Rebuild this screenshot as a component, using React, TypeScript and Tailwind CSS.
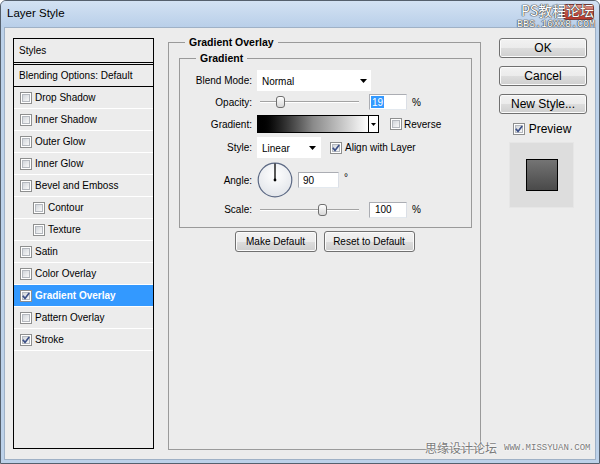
import React from "react";

const sans = "font-['Liberation_Sans',Arial,sans-serif]";
const cjk = "font-['Noto_Sans_CJK_SC','Liberation_Sans',sans-serif]";
const btn =
  "rounded-[3px] border border-[#707070] bg-[linear-gradient(#f2f2f2_0%,#ebebeb_50%,#dddddd_50%,#cfcfcf_100%)] shadow-[inset_0_0_0_1px_#fbfbfb] flex items-center justify-center text-black";

const styleRows = [
  { label: "Drop Shadow" },
  { label: "Inner Shadow" },
  { label: "Outer Glow" },
  { label: "Inner Glow" },
  { label: "Bevel and Emboss" },
  { label: "Contour", indent: true },
  { label: "Texture", indent: true },
  { label: "Satin" },
  { label: "Color Overlay" },
  { label: "Gradient Overlay", checked: true, active: true },
  { label: "Pattern Overlay" },
  { label: "Stroke", checked: true },
];

function CheckBox({ checked = false }: { checked?: boolean }) {
  return (
    <span className="w-[12px] h-[12px] shrink-0 border border-[#8e8f8f] bg-white p-[1px] flex">
      <span className="relative flex-1 border border-[#b4b8be] bg-gradient-to-br from-[#d2d6db] to-[#f8f8f8]">
        {checked && (
          <svg className="absolute -left-[1px] -top-[1px]" width="8" height="8" viewBox="0 0 8 8">
            <path d="M0.8 3.8 L3 6.4 L7.2 1" fill="none" stroke="#3b4f86" strokeWidth="1.7" />
          </svg>
        )}
      </span>
    </span>
  );
}

function Arrow() {
  return (
    <svg width="7" height="4" viewBox="0 0 7 4">
      <path d="M0 0h7L3.5 4z" fill="#000" />
    </svg>
  );
}

function Slider({ thumb }: { thumb: string }) {
  // thumb is a full left-[..] class
  return (
    <div className="relative w-[99px] h-[12px] flex items-center">
      <div className="w-full h-[2px] border-t border-[#a3a3a3] border-b border-b-white" />
      <div
        className={`absolute top-0 w-[9px] h-[12px] rounded-[3px] border border-[#6f6f6f] bg-gradient-to-b from-white to-[#d8d8d8] ${thumb}`}
      />
    </div>
  );
}

function Field({ children, w }: { children: React.ReactNode; w: string }) {
  return (
    <div className={`h-[16px] bg-white border border-[#abadb3] border-b-[#e3e9ef] border-r-[#dbdfe6] flex items-center ${w}`}>
      {children}
    </div>
  );
}

function Row({ label, h, children }: { label: string; h: string; children: React.ReactNode }) {
  return (
    <div className={`flex items-center ${h}`}>
      <span className="w-[72px] text-right">{label}</span>
      <div className="ml-[5px] flex items-center">{children}</div>
    </div>
  );
}

export default function App() {
  return (
    <div
      className={`relative w-[600px] h-[464px] overflow-hidden rounded-t-[6px] border border-[#55606d] bg-[#bcd1e9] flex flex-col text-[10px] text-black ${sans}`}
    >
      {/* title bar */}
      <div className="h-[26px] shrink-0 flex items-center pl-[6px] bg-gradient-to-b from-[#d3e2f3] to-[#b9cfe9] text-[11.5px]">
        Layer Style
      </div>

      {/* close button + watermark */}
      <div className="absolute right-[5px] top-[3px] w-[31px] h-[16px] rounded-[3px] border border-[#7a3a36] bg-gradient-to-b from-[#e4a196] via-[#c8574a] to-[#b9392c]" />
      <span
        className={`absolute right-[5px] top-[1px] text-[14px] leading-[16px] text-white [text-shadow:0_0_1px_#333,0_0_1px_#333,0_0_1px_#333] ${cjk}`}
      >
        PS教程论坛
      </span>
      <span className="absolute right-[4px] top-[19px] text-[10px] leading-[10px] text-white font-['Liberation_Mono',monospace] [text-shadow:0_0_1px_#333,0_0_1px_#333,0_0_1px_#333]">
        BBS.16XX8.COM
      </span>

      {/* body */}
      <div className="flex-1 mx-[3px] mb-[3px] border border-[#9fb1c6] bg-[#ececec] flex items-start pt-[7px] pl-[8px]">
        {/* styles list */}
        <div className="mt-[3px] w-[141px] h-[411px] shrink-0 border border-black bg-[#ececec] flex flex-col">
          <div className="h-[24px] pl-[5px] flex items-center border-b border-black">Styles</div>
          <div className="h-[1px]" />
          <div className="h-[23px] pl-[5px] flex items-center border-y border-black">Blending Options: Default</div>
          {styleRows.map((r) => (
            <div
              key={r.label}
              className={`h-[22px] flex items-center gap-[3px] border-b border-white ${r.indent ? "pl-[19px]" : "pl-[6px]"} ${
                r.active ? "bg-[#3399ff] text-white font-bold" : ""
              }`}
            >
              <CheckBox checked={r.checked} />
              <span>{r.label}</span>
            </div>
          ))}
        </div>

        {/* gradient overlay group */}
        <fieldset className="ml-[14px] w-[313px] h-[415px] shrink-0 border border-[#9a9a9a]">
          <legend className="ml-[16px] px-[4px] font-bold text-[10.5px] leading-[14px]">Gradient Overlay</legend>
          <fieldset className="mt-[2px] ml-[10px] w-[293px] border border-[#9a9a9a] pb-[8px]">
            <legend className="ml-[16px] px-[4px] font-bold text-[10.5px] leading-[14px]">Gradient</legend>
            <div className="pt-[5px] flex flex-col">
              <Row label="Blend Mode:" h="h-[21px]">
                <div className="w-[114px] h-[21px] bg-white flex items-center justify-between pl-[5px] pr-[4px]">
                  <span className="pt-[2px]">Normal</span>
                  <Arrow />
                </div>
              </Row>
              <Row label="Opacity:" h="h-[22px]">
                <div className="ml-[3px]">
                  <Slider thumb="left-[16px]" />
                </div>
                <div className="ml-[10px]">
                  <Field w="w-[38px]">
                    <span className="ml-[1px] px-[1px] h-[12px] flex items-center bg-[#3399ff] text-white">19</span>
                  </Field>
                </div>
                <span className="ml-[5px]">%</span>
              </Row>
              <Row label="Gradient:" h="h-[22px]">
                <div className="w-[122px] h-[18px] border border-black bg-white flex">
                  <div className="flex-1 bg-gradient-to-r from-black via-[#8a8a8a] to-white" />
                  <div className="w-[10px] border-l border-black flex items-center justify-center">
                    <svg width="5" height="3" viewBox="0 0 5 3">
                      <path d="M0 0h5L2.5 3z" fill="#000" />
                    </svg>
                  </div>
                </div>
                <div className="ml-[11px] flex items-center gap-[2px]">
                  <CheckBox />
                  <span>Reverse</span>
                </div>
              </Row>
              <Row label="Style:" h="h-[25px]">
                <div className="w-[64px] h-[21px] bg-white flex items-center justify-between pl-[5px] pr-[5px]">
                  <span className="pt-[2px]">Linear</span>
                  <Arrow />
                </div>
                <div className="ml-[9px] flex items-center gap-[3px]">
                  <CheckBox checked />
                  <span>Align with Layer</span>
                </div>
              </Row>
              <Row label="Angle:" h="h-[40px]">
                <svg width="36" height="36" viewBox="0 0 36 36">
                  <defs>
                    <radialGradient id="dial" cx="50%" cy="35%" r="65%">
                      <stop offset="0" stopColor="#ffffff" />
                      <stop offset="1" stopColor="#e2e5ea" />
                    </radialGradient>
                  </defs>
                  <circle cx="18" cy="18" r="16.8" fill="url(#dial)" stroke="#5c6984" strokeWidth="1.2" />
                  <line x1="18" y1="18" x2="18" y2="1.5" stroke="#000" strokeWidth="1.3" />
                  <circle cx="18" cy="18" r="1.4" fill="#000" />
                </svg>
                <div className="ml-[5px]">
                  <Field w="w-[41px]">
                    <span className="pl-[4px]">90</span>
                  </Field>
                </div>
                <span className="ml-[5px] mb-[6px]">°</span>
              </Row>
              <Row label="Scale:" h="h-[19px]">
                <div className="ml-[3px]">
                  <Slider thumb="left-[58px]" />
                </div>
                <div className="ml-[10px]">
                  <Field w="w-[38px]">
                    <span className="pl-[5px]">100</span>
                  </Field>
                </div>
                <span className="ml-[5px]">%</span>
              </Row>
            </div>
          </fieldset>
          <div className="mt-[3px] flex justify-center gap-[7px]">
            <button className={`h-[21px] w-[82px] ${btn}`}>Make Default</button>
            <button className={`h-[21px] w-[91px] ${btn}`}>Reset to Default</button>
          </div>
        </fieldset>

        {/* right column */}
        <div className="ml-[18px] mt-[3px] w-[88px] shrink-0 flex flex-col text-[12px]">
          <button className={`h-[20px] ${btn} border-[#3c7fb1] shadow-[inset_0_0_0_1px_#c4eefc]`}>OK</button>
          <button className={`mt-[8px] h-[20px] ${btn}`}>Cancel</button>
          <button className={`mt-[8px] h-[20px] ${btn}`}>New Style...</button>
          <div className="mt-[7px] h-[16px] flex items-center justify-center gap-[4px] pr-[2px]">
            <CheckBox checked />
            <span>Preview</span>
          </div>
          <div className="mt-[5px] ml-[10px] w-[65px] h-[66px] bg-[#dddddd] border border-[#e6e6e6] flex items-center justify-center">
            <div className="w-[32px] h-[32px] border border-black bg-gradient-to-b from-[#747474] to-[#4a4a4a]" />
          </div>
        </div>
      </div>

      {/* bottom watermark */}
      <div className="absolute left-[424px] top-[441px] flex items-center gap-[7px] text-[#7a7a7a] [text-shadow:0_0_2px_#fff,0_0_2px_#fff]">
        <span className={`text-[12px] leading-none ${cjk}`}>思缘设计论坛</span>
        <span className="text-[9px] leading-none font-['Liberation_Mono',monospace]">WWW.MISSYUAN.COM</span>
      </div>
    </div>
  );
}
